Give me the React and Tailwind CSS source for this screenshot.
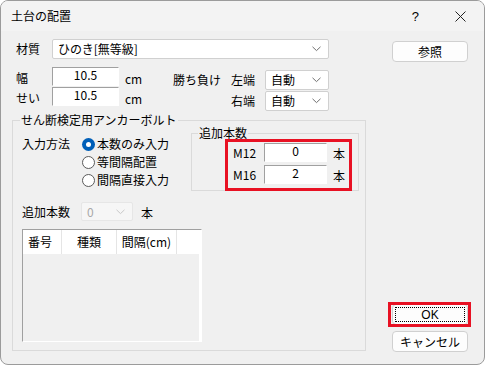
import React from "react";

function Chevron({ color = "#606060" }) {
  return (
    <svg width="9" height="6" viewBox="0 0 9 6" className="shrink-0">
      <polyline points="0.5,0.8 4.5,4.6 8.5,0.8" fill="none" stroke={color} strokeWidth="1" />
    </svg>
  );
}

function Combo({ w, text, disabled }) {
  return (
    <div
      className={
        "flex items-center h-full rounded-[2px] border pl-[5px] pr-[7px] " +
        w +
        (disabled ? " bg-[#f6f6f6] border-[#e6e6e6] text-[#a8a8a8]" : " bg-white border-[#d0d0d0]")
      }
    >
      <span className="flex-1 leading-none">{text}</span>
      <Chevron color={disabled ? "#c8c8c8" : "#707070"} />
    </div>
  );
}

function Sunken({ w, text }) {
  return (
    <div
      className={
        "h-full bg-white border-t border-l border-[#a0a0a0] border-b-white border-r-white border-b border-r flex items-center justify-center leading-none pb-[4px] " +
        w
      }
    >
      {text}
    </div>
  );
}

function Radio({ checked, label }) {
  return (
    <div className="flex items-center h-[18px]">
      {checked ? (
        <div className="w-[13px] h-[13px] rounded-full bg-[#005fb8] flex items-center justify-center">
          <div className="w-[5px] h-[5px] rounded-full bg-white" />
        </div>
      ) : (
        <div className="w-[13px] h-[13px] rounded-full bg-white border border-[#5a5a5a]" />
      )}
      <span className="ml-[2px] leading-none">{label}</span>
    </div>
  );
}

function Button({ children, extra = "" }) {
  return (
    <div
      className={
        "w-[76px] h-[21px] rounded-[4px] bg-[#fdfdfd] border border-[#d0d0d0] flex items-center justify-center leading-none " +
        extra
      }
    >
      {children}
    </div>
  );
}

export default function App() {
  return (
    <div className="w-[485px] h-[365px] bg-white font-['Noto_Sans_CJK_JP','Liberation_Sans',sans-serif] text-[12px] text-black">
      <div className="w-[485px] h-[365px] rounded-[8px] border border-[#9b9b9b] bg-[#f0f0f0] overflow-hidden flex flex-col">
        {/* Title bar */}
        <div className="h-[30px] shrink-0 bg-[#f3f3f3] flex items-center pl-[10px]">
          <span className="leading-none">土台の配置</span>
          <span className="ml-auto mr-[36px] text-[13px] leading-none font-['Liberation_Sans',sans-serif]">?</span>
          <svg width="11" height="11" viewBox="0 0 11 11" className="mr-[18px]">
            <line x1="0.5" y1="0.5" x2="10.5" y2="10.5" stroke="#222" strokeWidth="1" />
            <line x1="10.5" y1="0.5" x2="0.5" y2="10.5" stroke="#222" strokeWidth="1" />
          </svg>
        </div>

        {/* Client */}
        <div className="flex-1 flex">
          {/* Left column */}
          <div className="w-[365px] pl-[11px] flex flex-col">
            {/* Row 1 */}
            <div className="mt-[8px] h-[20px] flex items-center">
              <span className="w-[40px] pl-[4px] leading-none">材質</span>
              <Combo w="w-[277px]" text="ひのき[無等級]" />
            </div>

            {/* Rows 2-3 */}
            <div className="mt-[8px] flex">
              <div className="w-[161px] flex flex-col gap-[1px]">
                <div className="h-[19px] flex items-center">
                  <span className="w-[40px] pl-[4px] leading-none pt-[3px]">幅</span>
                  <Sunken w="w-[67px]" text="10.5" />
                  <span className="ml-[6px] leading-none pt-[4px]">cm</span>
                </div>
                <div className="h-[19px] flex items-center">
                  <span className="w-[40px] pl-[4px] leading-none pt-[3px]">せい</span>
                  <Sunken w="w-[67px]" text="10.5" />
                  <span className="ml-[6px] leading-none pt-[4px]">cm</span>
                </div>
              </div>
              <div className="w-[58px] pt-[3px] h-[23px] flex items-center">
                <span className="leading-none">勝ち負け</span>
              </div>
              <div className="mt-[3px] flex flex-col gap-[1px]">
                <div className="h-[20px] flex items-center">
                  <span className="w-[34px] leading-none">左端</span>
                  <Combo w="w-[64px]" text="自動" />
                </div>
                <div className="h-[20px] flex items-center">
                  <span className="w-[34px] leading-none">右端</span>
                  <Combo w="w-[64px]" text="自動" />
                </div>
              </div>
            </div>

            {/* Group box */}
            <div className="mt-[9px] w-[354px] h-[231px] relative border border-[#dadada]">
              <span className="absolute left-[7px] top-[-9px] px-[1px] bg-[#f0f0f0] leading-[16px]">
                せん断検定用アンカーボルト
              </span>

              <div className="flex">
                <div className="w-[178px] pl-[9px] pt-[14px] flex">
                  <span className="w-[60px] leading-[18px]">入力方法</span>
                  <div className="flex flex-col">
                    <Radio checked label="本数のみ入力" />
                    <Radio label="等間隔配置" />
                    <Radio label="間隔直接入力" />
                  </div>
                </div>

                {/* Inner group */}
                <div className="mt-[12px] w-[168px] h-[58px] relative border border-[#dadada]">
                  <span className="absolute left-[6px] top-[-9px] px-[1px] bg-[#f0f0f0] leading-[16px]">
                    追加本数
                  </span>
                  <div className="pt-[9px] pl-[41px] flex flex-col gap-[3px]">
                    <div className="h-[19px] flex items-center">
                      <span className="w-[31px] leading-none pt-[1px]">M12</span>
                      <Sunken w="w-[63px]" text="0" />
                      <span className="ml-[6px] leading-none pt-[2px]">本</span>
                    </div>
                    <div className="h-[19px] flex items-center">
                      <span className="w-[31px] leading-none pt-[1px]">M16</span>
                      <Sunken w="w-[63px]" text="2" />
                      <span className="ml-[6px] leading-none pt-[2px]">本</span>
                    </div>
                  </div>
                  <div className="absolute left-[33px] top-[5px] w-[127px] h-[52px] border-[3px] border-[#e81123]" />
                </div>
              </div>

              {/* 追加本数 row */}
              <div className="mt-[11px] pl-[9px] h-[19px] flex items-center">
                <span className="w-[59px] leading-none">追加本数</span>
                <Combo w="w-[52px]" text="0" disabled />
                <span className="ml-[8px] leading-none pt-[2px]">本</span>
              </div>

              {/* List */}
              <div className="mt-[8px] ml-[9px] w-[180px] h-[113px] bg-white border-t border-l border-[#a0a0a0] border-b border-r border-b-white border-r-white flex flex-col">
                <div className="h-[24px] flex shrink-0 mr-[2px] bg-white">
                  <div className="w-[39px] border-r border-[#e5e5e5] flex items-center pl-[5px] leading-none">番号</div>
                  <div className="w-[55px] border-r border-[#e5e5e5] flex items-center justify-center leading-none">種類</div>
                  <div className="w-[60px] border-r border-[#e5e5e5] flex items-center justify-center leading-none">間隔(cm)</div>
                  <div className="flex-1" />
                </div>
                <div className="flex-1 mr-[2px] bg-[#f0f0f0]" />
              </div>
            </div>
          </div>

          {/* Right column */}
          <div className="flex-1 flex flex-col pl-[26px]">
            <div className="mt-[10px]">
              <Button>参照</Button>
            </div>
            <div className="mt-auto relative">
              <Button extra="border-[#0067c0] relative">
                <div className="absolute inset-[2px] border border-dotted border-black" />
                <span className="font-['Liberation_Sans',sans-serif]">OK</span>
              </Button>
              <div className="absolute left-[-4px] top-[-2px] w-[83px] h-[25px] border-[3px] border-[#e81123]" />
            </div>
            <div className="mt-[6px] mb-[12px]">
              <Button>キャンセル</Button>
            </div>
          </div>
        </div>
      </div>
    </div>
  );
}
